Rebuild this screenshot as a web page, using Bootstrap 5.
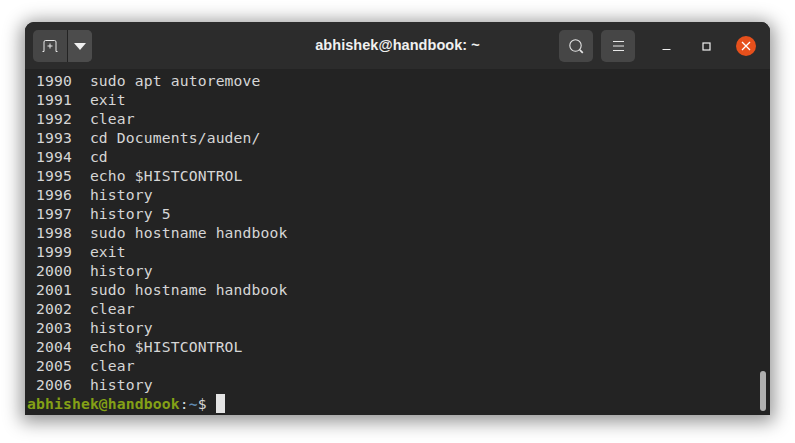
<!DOCTYPE html>
<html lang="en">
<head>
<meta charset="utf-8">
<title>Terminal</title>
<link href="https://cdn.jsdelivr.net/npm/bootstrap@5.3.0/dist/css/bootstrap.min.css" rel="stylesheet">
<style>
html,body{margin:0;height:443px;overflow:hidden;background:#fff}
.stage{padding:22px 25px 28px}
.term-win{height:393px;background:#232323;border-radius:9px 9px 0 0;box-shadow:0 3px 18px 4px rgba(0,0,0,.42);overflow:hidden}
.term-head{height:47px;background:#2c2c2c;padding:8px 4px 0 8px;display:grid;grid-template-columns:1fr auto 1fr;align-items:start}
.tool-group{width:59px;height:32px;background:#464646;border-radius:5px;overflow:hidden}
.tool-a{width:35px;height:32px;border-right:1px solid #232323}
.tool-b{flex:1;height:32px;background:#4c4c4c}
.tool-btn{width:34px;height:32px;background:#464646;border-radius:5px}
.title-txt{font:700 14.5px/30px "Liberation Sans",sans-serif;color:#f0f0f0;letter-spacing:.05px;height:32px;padding-right:4px}
.win-ctl{width:40px;height:32px}
.gap-ctl{margin-right:11px}
.gap-tool{margin-right:8px}
.close-dot{width:20px;height:20px;border-radius:50%;background:#e6501c}
.term-body{height:346px;padding:2px 0 0 2px;font:14.7px/19px "DejaVu Sans Mono",monospace;letter-spacing:.14px;color:#d6d6d6;white-space:pre;overflow:hidden}
.hist-line,.prompt-line{height:19px}
.p-user{color:#84a016;font-weight:700}
.p-path{color:#5f88b0;font-weight:700}
.cursor-box{display:inline-block;width:9px;height:19px;background:#e4e4e4;vertical-align:top}
.scroll-thumb{position:absolute;right:4px;bottom:4px;width:6px;height:40px;background:#b0b0b0;border-radius:3px}
</style>
</head>
<body>
<div class="stage">
  <div class="term-win d-flex flex-column position-relative">
    <div class="term-head">
      <div class="tool-group d-flex">
        <div class="tool-a d-flex align-items-center justify-content-center">
          <svg width="16" height="12" viewBox="0 0 16 12" fill="none" stroke="#e8e8e8" stroke-width="1"><path d="M.5 11.500h1.500V2q0-1.500 1.500-1.500h9Q14 .5 14 2v9.500h1.500"/><path d="M8 3.500v5M5.500 6h5"/></svg>
        </div>
        <div class="tool-b d-flex align-items-center justify-content-center">
          <svg width="12" height="7" viewBox="0 0 12 7"><path d="M0 0h12L6 7z" fill="#f0f0f0"/></svg>
        </div>
      </div>
      <div class="title-txt text-center">abhishek@handbook: ~</div>
      <div class="d-flex justify-content-end">
        <div class="tool-btn gap-tool d-flex align-items-center justify-content-center">
          <svg width="15" height="15" viewBox="0 0 15 15" fill="none" stroke="#e4e4e4" stroke-width="1.100"><circle cx="6.500" cy="6.500" r="5.700"/><path d="M10.800 10.800l3 3" stroke-width="1.700"/></svg>
        </div>
        <div class="tool-btn gap-ctl d-flex align-items-center justify-content-center">
          <svg width="11" height="10" viewBox="0 0 11 10" stroke="#e8e8e8" stroke-width="1"><path d="M0 .5h11M0 5h11M0 9.500h11"/></svg>
        </div>
        <div class="win-ctl d-flex align-items-center justify-content-center">
          <svg width="9" height="9" viewBox="0 0 9 9" stroke="#f0f0f0" stroke-width="1"><path d="M.5 7.500h8"/></svg>
        </div>
        <div class="win-ctl d-flex align-items-center justify-content-center">
          <svg width="9" height="9" viewBox="0 0 9 9" fill="none" stroke="#f0f0f0" stroke-width="1.200"><rect x="1" y="1" width="7" height="7"/></svg>
        </div>
        <div class="win-ctl d-flex align-items-center justify-content-center">
          <div class="close-dot d-flex align-items-center justify-content-center">
            <svg width="10" height="10" viewBox="0 0 10 10" stroke="#fff" stroke-width="1.300"><path d="M1 1l8 8M9 1l-8 8"/></svg>
          </div>
        </div>
      </div>
    </div>
    <div class="term-body"><div class="hist-line"> 1990  sudo apt autoremove</div><div class="hist-line"> 1991  exit</div><div class="hist-line"> 1992  clear</div><div class="hist-line"> 1993  cd Documents/auden/</div><div class="hist-line"> 1994  cd</div><div class="hist-line"> 1995  echo $HISTCONTROL</div><div class="hist-line"> 1996  history</div><div class="hist-line"> 1997  history 5</div><div class="hist-line"> 1998  sudo hostname handbook</div><div class="hist-line"> 1999  exit</div><div class="hist-line"> 2000  history</div><div class="hist-line"> 2001  sudo hostname handbook</div><div class="hist-line"> 2002  clear</div><div class="hist-line"> 2003  history</div><div class="hist-line"> 2004  echo $HISTCONTROL</div><div class="hist-line"> 2005  clear</div><div class="hist-line"> 2006  history</div><div class="prompt-line"><span class="p-user">abhishek@handbook</span>:<span class="p-path">~</span>$ <span class="cursor-box"></span></div></div>
    <div class="scroll-thumb"></div>
  </div>
</div>
<script src="https://cdn.jsdelivr.net/npm/bootstrap@5.3.0/dist/js/bootstrap.bundle.min.js"></script>
</body>
</html>
